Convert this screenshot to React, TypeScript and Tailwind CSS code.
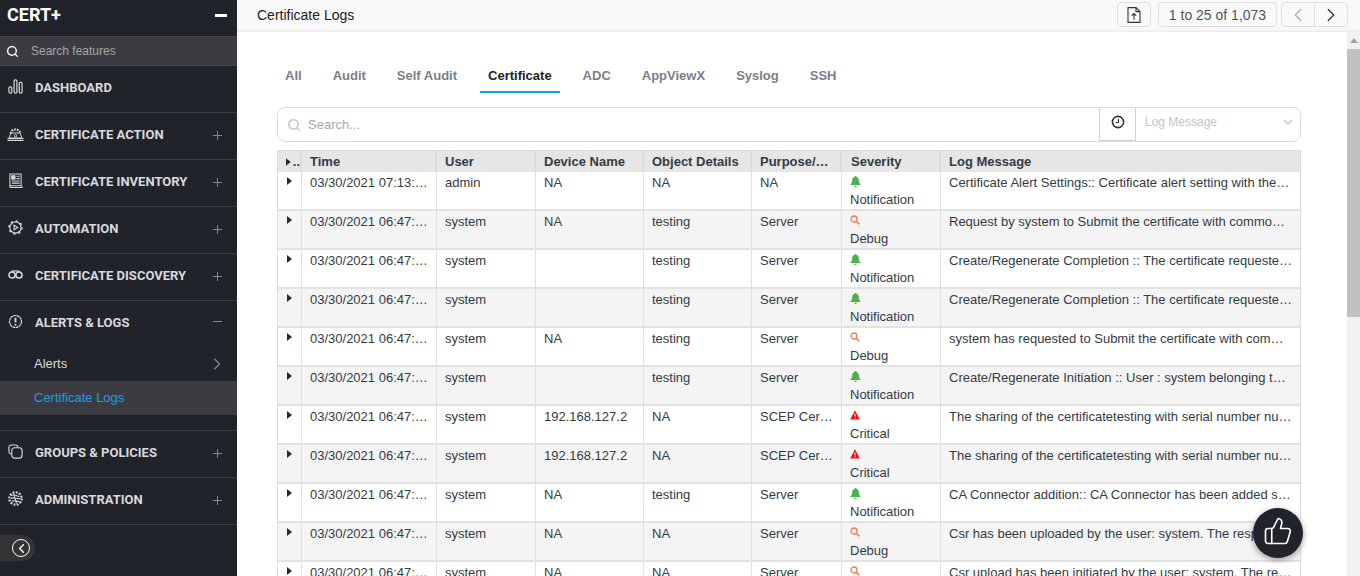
import React from 'react';
import { ChevronDown, ChevronLeft, ChevronRight, Search, ThumbsUp } from 'lucide-react';

type IconProps = { className?: string };

function DashIcon({ className }: IconProps) {
  return (
    <svg viewBox="0 0 16 16" className={className} fill="none" stroke="currentColor" strokeWidth="1.3">
      <rect x="1" y="8.5" width="3" height="6.500" rx="1.2" />
      <rect x="6.5" y="1" width="3" height="14" rx="1.2" />
      <rect x="12" y="3.5" width="3" height="11.5" rx="1.2" />
    </svg>
  );
}

function ActionIcon({ className }: IconProps) {
  return (
    <svg viewBox="0 0 17 14" className={className} fill="none" stroke="currentColor" strokeWidth="1">
      <path d="M.5 11.500h16M.5 13.300h16" strokeWidth="1.200" />
      <path d="M2 11 4 6h9l2 5z" />
      <path d="M3.600 6.500a5 5 0 0 1 9.800 0" strokeDasharray="1.700 1" strokeWidth="2.200" />
      <circle cx="8.500" cy="8.700" r="1.200" />
    </svg>
  );
}

function InventoryIcon({ className }: IconProps) {
  return (
    <svg viewBox="0 0 16 16" className={className} fill="none" stroke="currentColor" strokeWidth="1.1">
      <path d="M2 1h12v12.500H3.500A1.300 1.300 0 0 0 2 15z" />
      <path d="M2 14.500c0 .6.6 1 1.500 1H15v-2" />
      <rect x="4" y="3" width="3.500" height="3.500" fill="currentColor" />
      <path d="M9 3.500h3.500M9 6h3.500M4 8.500h8.500M4 10.800h8.500" />
    </svg>
  );
}

function AutomationIcon({ className }: IconProps) {
  return (
    <svg viewBox="0 0 16 16" className={className} fill="none" stroke="currentColor" strokeWidth="1.200">
      <circle cx="8" cy="8" r="6" />
      <circle cx="8" cy="8" r="7" strokeDasharray="2.200 3.300" strokeWidth="1.600" />
      <path d="M6.500 5.500v5l4-2.500z" />
    </svg>
  );
}

function DiscoveryIcon({ className }: IconProps) {
  return (
    <svg viewBox="0 0 16 10" className={className} fill="none" stroke="currentColor" strokeWidth="1.600">
      <circle cx="4.300" cy="5.500" r="3.300" />
      <circle cx="11.700" cy="5.500" r="3.300" />
      <path d="M3 2.200c2-1.500 8-1.500 10 0" strokeWidth="1.200" />
    </svg>
  );
}

function AlertIcon({ className }: IconProps) {
  return (
    <svg viewBox="0 0 16 16" className={className} fill="none" stroke="currentColor" strokeWidth="1.300">
      <circle cx="8" cy="8" r="6.400" strokeDasharray="3 .4" />
      <path d="M8 4v5" strokeWidth="2" />
      <path d="M8 10.600v1.800" strokeWidth="2" />
    </svg>
  );
}

function GroupsIcon({ className }: IconProps) {
  return (
    <svg viewBox="0 0 16 16" className={className} fill="none" stroke="currentColor" strokeWidth="1.200">
      <path d="M3.400 10.500A2.400 2.400 0 0 1 1 8V3.400A2.400 2.400 0 0 1 3.400 1H8a2.400 2.400 0 0 1 2.400 2.400" />
      <rect x="4" y="4" width="11" height="11" rx="3" />
    </svg>
  );
}

function AdminIcon({ className }: IconProps) {
  return (
    <svg viewBox="0 0 16 16" className={className} fill="none" stroke="currentColor" strokeWidth="1.200">
      <circle cx="8" cy="8" r="6.600" strokeDasharray="2 1.400" strokeWidth="2.400" />
      <path d="M3 5c3-2 6 0 9 1M3 8c3-2 7 1 10 0M4 11c3-2 6 1 8 0M6 3l3 10" />
    </svg>
  );
}

function ExportIcon({ className }: IconProps) {
  return (
    <svg viewBox="0 0 14 16" className={className} fill="none" stroke="currentColor" strokeWidth="1.100">
      <path d="M1 .6h8l4 4v10.800H1z" />
      <path d="M9 .6v4h4" />
      <path d="M7 12.500V6.500M4.800 8.700 7 6.500l2.200 2.200" />
    </svg>
  );
}

function ClockIcon({ className }: IconProps) {
  return (
    <svg viewBox="0 0 14 14" className={className} fill="none" stroke="currentColor">
      <circle cx="7" cy="7" r="5.600" strokeWidth="1.600" />
      <path d="M7.500 3.800V7.500H4.800" strokeWidth="1.100" />
    </svg>
  );
}

function Caret() {
  return (
    <svg viewBox="0 0 5 8" className="h-2 w-[5px] fill-[#1f2a3a]">
      <path d="M0 0l5 4-5 4z" />
    </svg>
  );
}

function NotificationIcon() {
  return (
    <svg viewBox="0 0 10 10" className="h-[11px] w-[11px] fill-[#4caf50]">
      <path d="M5 0a1 1 0 0 1 1 1c1.600.4 2 1.600 2 3 0 1.800.6 2.600 1.500 3.500v.7H.5v-.7C1.400 6.600 2 5.800 2 4c0-1.400.4-2.600 2-3a1 1 0 0 1 1-1zM3.800 8.800h2.400A1.200 1.200 0 0 1 3.800 8.800z" />
    </svg>
  );
}

function DebugIcon() {
  return (
    <svg viewBox="0 0 10 10" className="h-[10px] w-[10px]" fill="none" stroke="#f2764f" strokeWidth="1.300">
      <circle cx="4" cy="4" r="3" />
      <path d="M6.200 6.200 9.300 9.300" strokeWidth="1.600" />
    </svg>
  );
}

function CriticalIcon() {
  return (
    <svg viewBox="0 0 10 10" className="h-[10px] w-[10px]">
      <path d="M5 .3 9.800 9.500H.2z" fill="#f20d0d" />
      <path d="M5 3.500v3M5 7.300v1" stroke="#fff" strokeWidth="1" />
    </svg>
  );
}

const stdIcon = 'mt-[13px] h-[15px] w-[15px]';

const nav = [
  { label: 'CERTIFICATE ACTION', icon: ActionIcon, iconClass: '-ml-px mr-[-1px] mt-[14px] h-[14px] w-[17px]' },
  { label: 'CERTIFICATE INVENTORY', icon: InventoryIcon, iconClass: stdIcon },
  { label: 'AUTOMATION', icon: AutomationIcon, iconClass: stdIcon },
  { label: 'CERTIFICATE DISCOVERY', icon: DiscoveryIcon, iconClass: stdIcon },
];

function NavRow({ label, icon: Icon, iconClass }: { label: string; icon: React.ComponentType<IconProps>; iconClass: string }) {
  return (
    <div className="flex h-[47px] items-start border-b border-[#3a3d43] pl-2 pr-[15px]">
      <Icon className={`${iconClass} shrink-0 text-[#d8d8d8]`} />
      <span className="ml-3 mt-[13px] text-[13px] font-bold leading-[18px] text-[#d8dadd]">{label}</span>
      <span className="ml-auto mt-[18px] h-[9px] w-[9px] bg-[linear-gradient(#85878b,#85878b),linear-gradient(#85878b,#85878b)] bg-[length:100%_1px,1px_100%] bg-center bg-no-repeat" />
    </div>
  );
}

function Sidebar() {
  return (
    <aside className="flex h-full w-[237px] shrink-0 flex-col bg-[#20232a] font-['Roboto',sans-serif]">
      <div className="flex h-9 items-center justify-between pb-[6px] pl-[7px] pr-[10px]">
        <span className="text-lg font-bold text-white">CERT+</span>
        <span className="h-[3px] w-[12px] bg-white" />
      </div>
      <div className="flex h-[30px] items-center border-y border-[#45474c] bg-[#3b3c41] pl-[6px] font-['Liberation_Sans',sans-serif]">
        <Search className="h-[13px] w-[13px] text-white" strokeWidth={2.5} />
        <span className="ml-3 text-xs text-[#a5a6a9]">Search features</span>
      </div>
      <div className="flex h-[47px] items-start border-b border-[#3a3d43] pl-2">
        <DashIcon className={`${stdIcon} text-[#d8d8d8]`} />
        <span className="ml-3 mt-[13px] text-[13px] font-bold leading-[18px] text-[#d8dadd]">DASHBOARD</span>
      </div>
      {nav.map((n) => (
        <NavRow key={n.label} label={n.label} icon={n.icon} iconClass={n.iconClass} />
      ))}
      <div className="h-[130px] border-b border-[#3a3d43]">
        <div className="flex h-[45px] items-start pl-2 pr-[15px]">
          <AlertIcon className={`${stdIcon} text-[#d8d8d8]`} />
          <span className="ml-3 mt-[13px] text-[13px] font-bold leading-[18px] text-[#d8dadd]">ALERTS &amp; LOGS</span>
          <span className="ml-auto mt-[20px] h-px w-[9px] bg-[#85878b]" />
        </div>
        <div className="flex h-[35px] items-center justify-between pl-[34px] pr-[10px] font-['Liberation_Sans',sans-serif] text-[13px] text-[#d8dadd]">
          <span>Alerts</span>
          <ChevronRight className="h-5 w-5 text-[#85878b]" strokeWidth={1.3} />
        </div>
        <div className="flex h-[34px] items-center bg-[#3b3c41] pl-[34px] font-['Liberation_Sans',sans-serif] text-[13px] text-[#1a9fe3]">
          Certificate Logs
        </div>
      </div>
      <NavRow label="GROUPS &amp; POLICIES" icon={GroupsIcon} iconClass={stdIcon} />
      <NavRow label="ADMINISTRATION" icon={AdminIcon} iconClass={stdIcon} />
      <div className="mt-[10px] flex h-[26px] w-[35px] items-center justify-end rounded-r-full bg-[#333436] pr-[5px]">
        <span className="flex h-[18px] w-[18px] items-center justify-center rounded-full border border-white">
          <ChevronLeft className="h-[15px] w-[15px] text-white" strokeWidth={2.2} />
        </span>
      </div>
    </aside>
  );
}

type Sev = 'Notification' | 'Debug' | 'Critical';
type Row = { time: string; user: string; device: string; object: string; purpose: string; sev: Sev; msg: string };

const rows: Row[] = [
  { time: '03/30/2021 07:13:…', user: 'admin', device: 'NA', object: 'NA', purpose: 'NA', sev: 'Notification', msg: 'Certificate Alert Settings:: Certificate alert setting with the…' },
  { time: '03/30/2021 06:47:…', user: 'system', device: 'NA', object: 'testing', purpose: 'Server', sev: 'Debug', msg: 'Request by system to Submit the certificate with commo…' },
  { time: '03/30/2021 06:47:…', user: 'system', device: '', object: 'testing', purpose: 'Server', sev: 'Notification', msg: 'Create/Regenerate Completion :: The certificate requeste…' },
  { time: '03/30/2021 06:47:…', user: 'system', device: '', object: 'testing', purpose: 'Server', sev: 'Notification', msg: 'Create/Regenerate Completion :: The certificate requeste…' },
  { time: '03/30/2021 06:47:…', user: 'system', device: 'NA', object: 'testing', purpose: 'Server', sev: 'Debug', msg: 'system has requested to Submit the certificate with com…' },
  { time: '03/30/2021 06:47:…', user: 'system', device: '', object: 'testing', purpose: 'Server', sev: 'Notification', msg: 'Create/Regenerate Initiation :: User : system belonging t…' },
  { time: '03/30/2021 06:47:…', user: 'system', device: '192.168.127.2', object: 'NA', purpose: 'SCEP Cer…', sev: 'Critical', msg: 'The sharing of the certificatetesting with serial number nu…' },
  { time: '03/30/2021 06:47:…', user: 'system', device: '192.168.127.2', object: 'NA', purpose: 'SCEP Cer…', sev: 'Critical', msg: 'The sharing of the certificatetesting with serial number nu…' },
  { time: '03/30/2021 06:47:…', user: 'system', device: 'NA', object: 'testing', purpose: 'Server', sev: 'Notification', msg: 'CA Connector addition:: CA Connector has been added s…' },
  { time: '03/30/2021 06:47:…', user: 'system', device: 'NA', object: 'NA', purpose: 'Server', sev: 'Debug', msg: 'Csr has been uploaded by the user: system. The respon…' },
  { time: '03/30/2021 06:47:…', user: 'system', device: 'NA', object: 'NA', purpose: 'Server', sev: 'Debug', msg: 'Csr upload has been initiated by the user: system. The re…' },
];

const gridCols = 'grid grid-cols-[24px_135px_99px_108px_108px_90px_99px_1fr]';
const tabs = ['All', 'Audit', 'Self Audit', 'Certificate', 'ADC', 'AppViewX', 'Syslog', 'SSH'];

function TableRow({ row, index }: { row: Row; index: number }) {
  const cell = 'truncate border-r border-[#e0e0e0] pl-2 pt-[3px] leading-[16px]';
  return (
    <div className={`${gridCols} h-[39px] border-b-2 border-[#e2e2e2] text-[13px] text-[#333b45] ${index % 2 ? 'bg-[#f4f4f4]' : 'bg-white'}`}>
      <div className="flex justify-center border-r border-[#e0e0e0] pt-[5px]"><Caret /></div>
      <div className={cell}>{row.time}</div>
      <div className={cell}>{row.user}</div>
      <div className={cell}>{row.device}</div>
      <div className={cell}>{row.object}</div>
      <div className={cell}>{row.purpose}</div>
      <div className="border-r border-[#e0e0e0] pl-2 pt-[3px]">
        <div className="flex h-[12px] items-center">
          {row.sev === 'Notification' && <NotificationIcon />}
          {row.sev === 'Debug' && <DebugIcon />}
          {row.sev === 'Critical' && <CriticalIcon />}
        </div>
        <div className="mt-[3px] leading-[20px]">{row.sev}</div>
      </div>
      <div className="truncate px-2 pt-[3px] leading-[16px]">{row.msg}</div>
    </div>
  );
}

function Main() {
  return (
    <div className="flex min-w-0 flex-1 flex-col font-['Liberation_Sans',sans-serif]">
      <header className="flex h-8 shrink-0 items-center justify-between border-b-2 border-[#efefef] bg-[#f9f9f9] pb-px pl-5 pr-3">
        <h1 className="text-sm font-normal text-[#222]">Certificate Logs</h1>
        <div className="flex items-center">
          <button className="flex h-[25px] w-[34px] items-center justify-center rounded border border-[#e0e0e0]">
            <ExportIcon className="h-4 w-[14px] text-[#333]" />
          </button>
          <div className="ml-[7px] flex h-[25px] w-[119px] items-center justify-center rounded border border-[#e0e0e0] text-sm text-[#555]">1 to 25 of 1,073</div>
          <div className="ml-1 flex h-[25px] w-[67px] rounded border border-[#e0e0e0]">
            <span className="flex flex-1 items-center justify-center border-r border-[#e0e0e0]"><ChevronLeft className="h-[22px] w-[22px] text-[#aaa]" strokeWidth={1.3} /></span>
            <span className="flex flex-1 items-center justify-center"><ChevronRight className="h-[22px] w-[22px] text-[#333]" strokeWidth={1.3} /></span>
          </div>
        </div>
      </header>
      <div className="flex min-h-0 flex-1">
        <div className="min-w-0 flex-1 overflow-hidden pl-10 pr-[46px]">
          <nav className="mt-[28px] flex h-[33px] gap-[15px] text-[13px] font-bold text-[#7a7f85]">
            {tabs.map((t) => (
              <span key={t} className={`flex h-full items-center border-b-2 px-2 ${t === 'Certificate' ? 'border-[#0ca7e0] text-[#222]' : 'border-transparent'}`}>{t}</span>
            ))}
          </nav>
          <div className="mt-[14px] flex h-[35px] rounded-lg border border-[#dcdcdc]">
            <div className="flex flex-1 items-center pl-[9px]">
              <Search className="h-[14px] w-[14px] text-[#c5c5c5]" strokeWidth={2.5} />
              <span className="ml-[7px] text-[13px] text-[#a8a8a8]">Search...</span>
            </div>
            <div className="flex w-[37px] items-center justify-center border-x border-b border-[#d0d0d0] pb-1">
              <ClockIcon className="h-[14px] w-[14px] text-[#333]" />
            </div>
            <div className="flex w-[164px] items-center justify-between pb-[6px] pl-[9px] pr-[5px] text-xs text-[#c4c4c4]">
              <span>Log Message</span>
              <ChevronDown className="h-[14px] w-[14px] text-[#c8c8c8]" strokeWidth={2.5} />
            </div>
          </div>
          <div className="mt-[8px] border-x border-t border-[#dcdcdc]">
            <div className={`${gridCols} h-[21px] items-stretch bg-[#e6e6e6] text-[13px] font-bold leading-[21px] text-[#333b45]`}>
              <div className="flex items-center gap-[2px] border-r-2 border-[#dcdcdc] pl-2"><Caret /><span className="leading-none">..</span></div>
              <div className="border-r-2 border-[#dcdcdc] pl-2">Time</div>
              <div className="border-r-2 border-[#dcdcdc] pl-2">User</div>
              <div className="border-r-2 border-[#dcdcdc] pl-2">Device Name</div>
              <div className="border-r-2 border-[#dcdcdc] pl-2">Object Details</div>
              <div className="border-r-2 border-[#dcdcdc] pl-2">Purpose/…</div>
              <div className="border-r-2 border-[#dcdcdc] pl-[9px]">Severity</div>
              <div className="pl-2">Log Message</div>
            </div>
            {rows.map((r, i) => (
              <TableRow key={i} row={r} index={i} />
            ))}
          </div>
        </div>
        <div className="flex w-[13px] shrink-0 flex-col bg-[#f1f1f1]">
          <div className="flex h-[17px] items-center justify-center">
            <span className="h-0 w-0 border-x-4 border-b-[5px] border-x-transparent border-b-[#a3a3a3]" />
          </div>
          <div className="h-[268px] bg-[#c1c1c1]" />
        </div>
      </div>
    </div>
  );
}

export default function App() {
  return (
    <div className="relative flex h-[576px] w-[1360px] overflow-hidden bg-white">
      <Sidebar />
      <Main />
      <button className="absolute left-[1253px] top-[508px] flex h-[50px] w-[50px] items-center justify-center rounded-full bg-[#20232a] pb-1 shadow-[0_2px_6px_rgba(0,0,0,0.4)]">
        <ThumbsUp className="h-[30px] w-[30px] text-white" strokeWidth={1.3} />
      </button>
    </div>
  );
}
